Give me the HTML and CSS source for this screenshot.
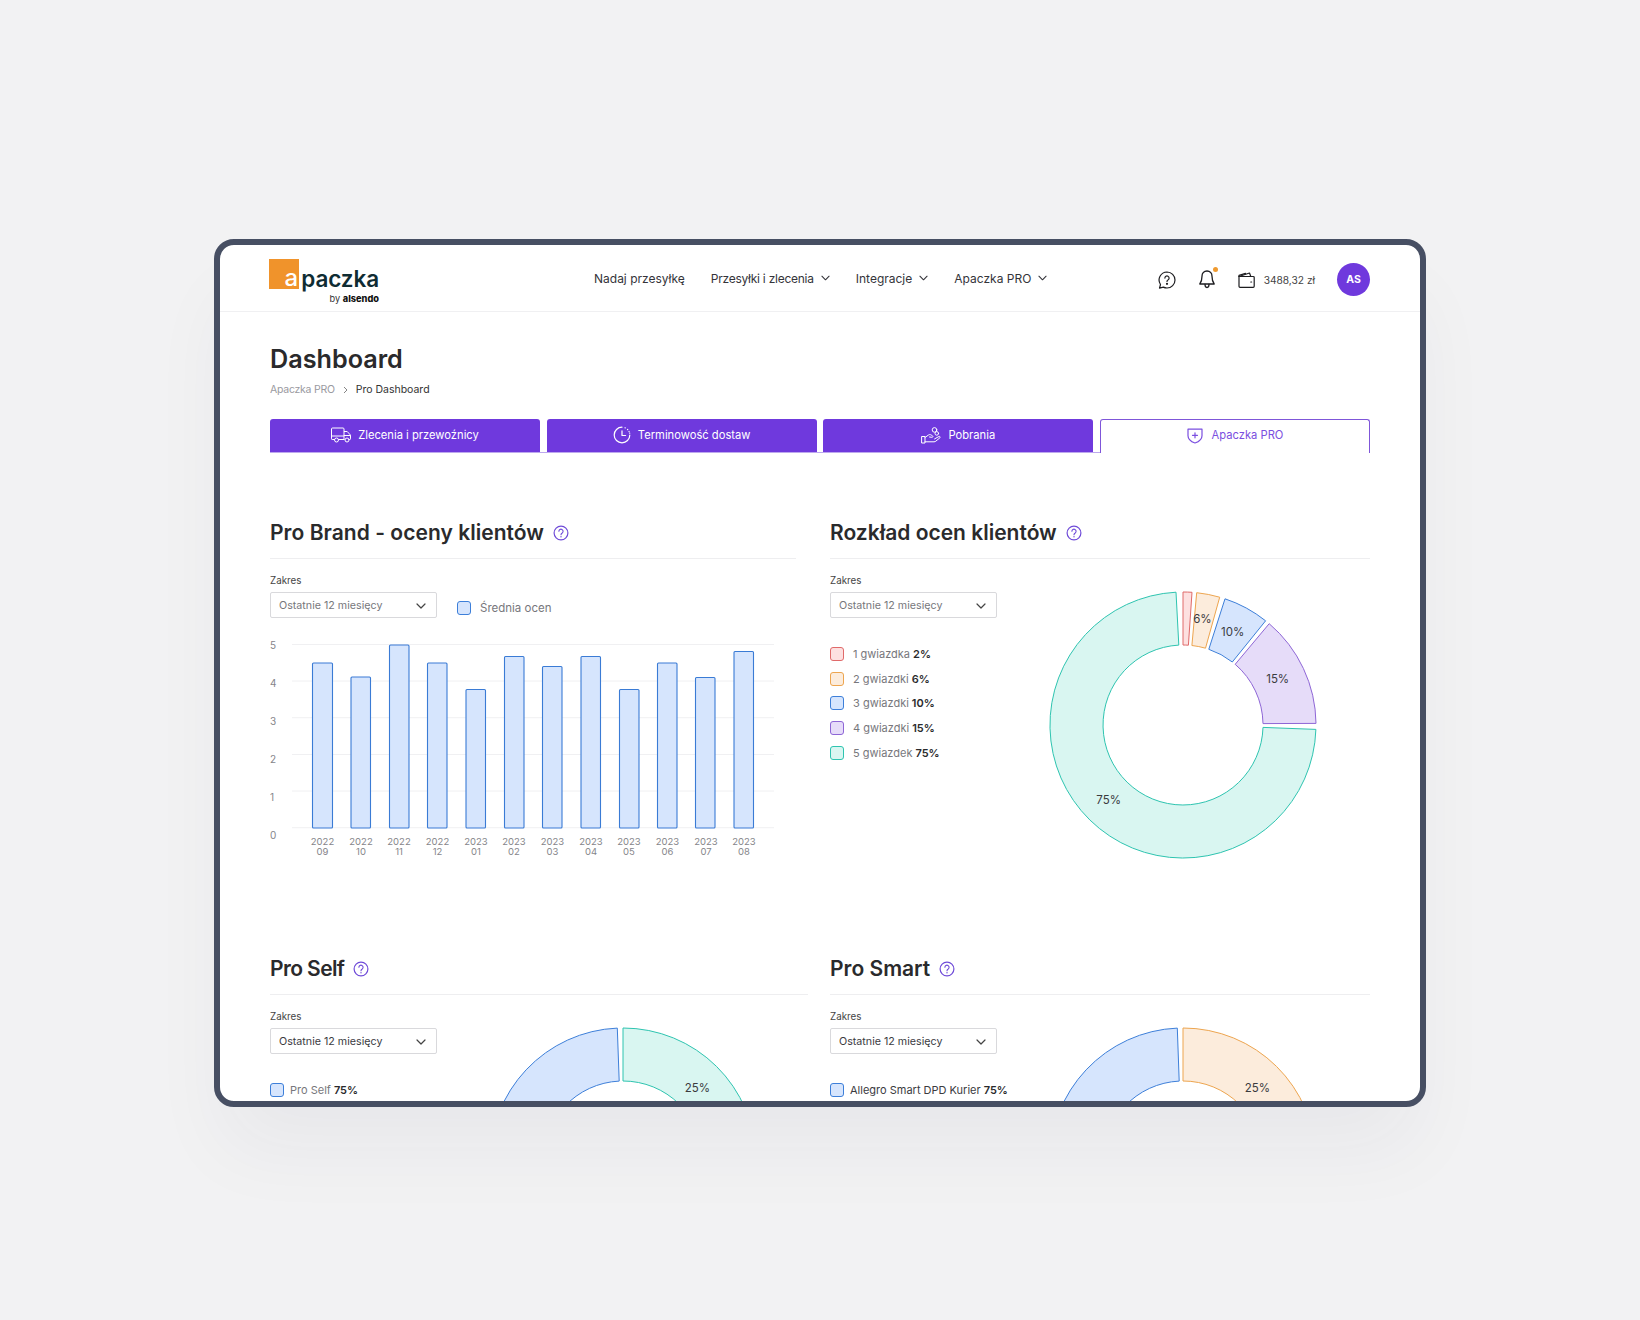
FILE: index.html
```html
<!DOCTYPE html>
<html lang="pl">
<head>
  <meta charset="UTF-8" />
  <meta name="viewport" content="width=device-width, initial-scale=1" />
  <title>Apaczka PRO - Dashboard</title>
  <link rel="stylesheet" href="styles.css">
</head>
<body>
  <svg class="sprite" aria-hidden="true">
    <symbol id="help" viewBox="0 0 16 16">
      <circle cx="8" cy="8" r="6.9" fill="none" stroke="currentColor" stroke-width="1.2"/>
      <path d="M5.9 6.3a2.1 2.1 0 1 1 3.3 1.7c-.8.5-1.2.9-1.2 1.8" fill="none" stroke="currentColor" stroke-width="1.1" stroke-linecap="round"/>
      <circle cx="8" cy="11.7" r=".7" fill="currentColor"/>
    </symbol>
    <symbol id="chev" viewBox="0 0 10 6">
      <path d="M1 1l4 4 4-4" fill="none" stroke="currentColor" stroke-width="1.2" stroke-linecap="round" stroke-linejoin="round"/>
    </symbol>
  </svg>

  <div class="frame">
    <header class="topbar">
      <a class="logo">
        <span class="logo-main"><span class="logo-box">a</span><span class="logo-name">paczka</span></span>
        <span class="logo-by">by <b>alsendo</b></span>
      </a>
      <nav class="nav">
        <a>Nadaj przesyłkę</a>
        <a class="nav-tight">Przesyłki i zlecenia <svg class="chev"><use href="#chev"/></svg></a>
        <a>Integracje <svg class="chev"><use href="#chev"/></svg></a>
        <a>Apaczka PRO <svg class="chev"><use href="#chev"/></svg></a>
      </nav>
      <div class="actions">
        <svg class="act-icon" viewBox="0 0 18 18" fill="none" stroke="currentColor" stroke-width="1.2" stroke-linecap="round" stroke-linejoin="round">
          <path d="M9 1a8 8 0 0 1 0 16c-1.3 0-2.6-.3-3.7-.9l-3.800 1 1-3.600A8 8 0 0 1 9 1z"/>
          <path d="M6.900 7.100a2.100 2.100 0 1 1 3.300 1.700c-.8.5-1.200.9-1.200 1.700"/>
          <circle cx="9" cy="12.800" r=".5" fill="currentColor"/>
        </svg>
        <span class="bell">
          <svg class="act-icon act-bell" viewBox="0 0 16 19" fill="none" stroke="currentColor" stroke-width="1.3" stroke-linecap="round" stroke-linejoin="round">
            <path d="M8 1c-3 0-5 2.300-5 5.200 0 4.300-.9 6.100-2.200 7.800h14.400c-1.300-1.700-2.200-3.500-2.200-7.800C13 3.300 11 1 8 1z"/>
            <path d="M6 14.300c0 1.800.8 3.200 2 3.200s2-1.400 2-3.200"/>
          </svg>
          <i class="bell-dot"></i>
        </span>
        <span class="wallet">
          <svg class="act-icon act-wallet" viewBox="0 0 17 16" fill="none" stroke="currentColor" stroke-width="1.2" stroke-linecap="round" stroke-linejoin="round">
            <path d="M1 4.500h14.200a1 1 0 0 1 1 1v8.800a1 1 0 0 1-1 1H2a1 1 0 0 1-1-1z"/>
            <path d="M1 4.500 11.500 1l1.300 3.500"/>
            <path d="M1 4.500V3.300l6.500-1.900"/>
            <path d="M12.800 10h.8"/>
          </svg>
          <span>3488,32 zł</span>
        </span>
        <span class="avatar">AS</span>
      </div>
    </header>

    <main class="content">
      <h1 class="page-title">Dashboard</h1>
      <div class="crumbs">
        <span>Apaczka PRO</span>
        <svg width="5" height="8" viewBox="0 0 5 8"><path d="M1 1l3 3-3 3" fill="none" stroke="#777" stroke-width=".9"/></svg>
        <b>Pro Dashboard</b>
      </div>

      <div class="tabs">
        <a class="tab">
          <svg width="20" height="16" viewBox="0 0 20 16" fill="none" stroke="currentColor" stroke-width="1" stroke-linejoin="round">
            <path d="M3.500 12.500H1.200a.7.7 0 0 1-.7-.7V2a1 1 0 0 1 1-1h10.500a1 1 0 0 1 1 1v10.500H7.500"/>
            <path d="M13 4.500h3.200l3.300 3.600v3.700a.7.7 0 0 1-.7.7h-1.300M13.500 12.500h.5"/>
            <path d="M.5 9h12.500M13 8.500h6"/>
            <circle cx="5.500" cy="13" r="2"/><circle cx="16" cy="13" r="2"/>
          </svg>
          Zlecenia i przewoźnicy
        </a>
        <a class="tab">
          <svg width="18" height="18" viewBox="0 0 18 18" fill="none" stroke="currentColor" stroke-width="1.2" stroke-linecap="round" stroke-linejoin="round">
            <path d="M9 1.200A7.800 7.800 0 1 0 16.800 9"/>
            <path d="M9 4.800V9.500h3.600"/>
            <path d="M12 1.800l.2.1M14.500 3.300l.2.2M16 5.500l.1.2M16.700 7.100v.1"/>
          </svg>
          Terminowość dostaw
        </a>
        <a class="tab">
          <svg width="20" height="17" viewBox="0 0 20 17" fill="none" stroke="currentColor" stroke-width="1" stroke-linecap="round" stroke-linejoin="round">
            <path d="M1 9.500h3v6.500H1z"/>
            <path d="M4 10.500l3.500-2.500c1-.6 1.800-.5 2.700 0l1.300.8c.8.500.4 1.700-.6 1.500l-2.400-.3"/>
            <path d="M4 14.800h9c.8 0 1.300-.2 1.900-.7l4-3.300c.7-.7-.1-1.800-1-1.300l-4.300 2.400"/>
            <circle cx="13.500" cy="2.900" r="2.300"/><circle cx="15.800" cy="6.400" r="1.800"/>
          </svg>
          Pobrania
        </a>
        <a class="tab tab-active">
          <svg width="16" height="17" viewBox="0 0 16 17" fill="none" stroke="currentColor" stroke-width="1.2" stroke-linecap="round" stroke-linejoin="round">
            <path d="M1 2.200h14v6.500c0 3.300-2.800 5.800-7 7.300-4.200-1.500-7-4-7-7.300z"/>
            <path d="M8 5.800v5M5.500 8.300h5"/>
          </svg>
          Apaczka PRO
        </a>
      </div>

      <div class="panels">
        <section class="panel">
          <div class="panel-head">
            <h2 class="title-wide">Pro Brand - oceny klientów</h2>
            <svg class="help"><use href="#help"/></svg>
          </div>
          <div class="bar-controls">
            <div class="field">
              <label>Zakres</label>
              <div class="select select-muted">Ostatnie 12 miesięcy <svg class="select-chev"><use href="#chev"/></svg></div>
            </div>
            <div class="bar-legend"><i class="swatch swatch-blue"></i>Średnia ocen</div>
          </div>
          <svg class="bar-chart" width="526" height="230" viewBox="270 630 526 230">
            <g class="grid">
              <path d="M292 644.500H774M292 681H774M292 717.700H774M292 754.500H774M292 791H774M292 827.700H774"/>
            </g>
            <g class="y-labels">
              <text x="270" y="649">5</text><text x="270" y="687">4</text><text x="270" y="725">3</text>
              <text x="270" y="763">2</text><text x="270" y="801">1</text><text x="270" y="839">0</text>
            </g>
            <g class="bars">
              <rect x="312.500" y="663" width="20" height="165" rx="1"/>
              <rect x="351" y="677" width="19.500" height="151" rx="1"/>
              <rect x="389.500" y="645" width="19.500" height="183" rx="1"/>
              <rect x="427.500" y="663" width="19.500" height="165" rx="1"/>
              <rect x="466" y="689.500" width="19.500" height="138.500" rx="1"/>
              <rect x="504.500" y="656.500" width="19.500" height="171.500" rx="1"/>
              <rect x="542.500" y="666.500" width="19.500" height="161.500" rx="1"/>
              <rect x="581" y="656.500" width="19.500" height="171.500" rx="1"/>
              <rect x="619.500" y="689.500" width="19.500" height="138.500" rx="1"/>
              <rect x="657.500" y="663" width="19.500" height="165" rx="1"/>
              <rect x="695.500" y="677.500" width="19.500" height="150.500" rx="1"/>
              <rect x="734" y="651.500" width="19.500" height="176.500" rx="1"/>
            </g>
            <g class="x-labels">
              <text x="322.500" y="845">2022</text><text x="322.500" y="855">09</text>
              <text x="361" y="845">2022</text><text x="361" y="855">10</text>
              <text x="399" y="845">2022</text><text x="399" y="855">11</text>
              <text x="437.500" y="845">2022</text><text x="437.500" y="855">12</text>
              <text x="476" y="845">2023</text><text x="476" y="855">01</text>
              <text x="514" y="845">2023</text><text x="514" y="855">02</text>
              <text x="552.500" y="845">2023</text><text x="552.500" y="855">03</text>
              <text x="591" y="845">2023</text><text x="591" y="855">04</text>
              <text x="629" y="845">2023</text><text x="629" y="855">05</text>
              <text x="667.500" y="845">2023</text><text x="667.500" y="855">06</text>
              <text x="706" y="845">2023</text><text x="706" y="855">07</text>
              <text x="744" y="845">2023</text><text x="744" y="855">08</text>
            </g>
          </svg>
        </section>

        <section class="panel">
          <div class="panel-head">
            <h2>Rozkład ocen klientów</h2>
            <svg class="help"><use href="#help"/></svg>
          </div>
          <div class="panel-body">
            <div class="side">
              <div class="field">
                <label>Zakres</label>
                <div class="select select-muted">Ostatnie 12 miesięcy <svg class="select-chev"><use href="#chev"/></svg></div>
              </div>
              <ul class="legend">
                <li><i class="swatch swatch-red"></i>1 gwiazdka <b>2%</b></li>
                <li><i class="swatch swatch-orange"></i>2 gwiazdki <b>6%</b></li>
                <li><i class="swatch swatch-blue"></i>3 gwiazdki <b>10%</b></li>
                <li><i class="swatch swatch-purple"></i>4 gwiazdki <b>15%</b></li>
                <li><i class="swatch swatch-teal"></i>5 gwiazdek <b>75%</b></li>
              </ul>
            </div>
            <svg class="donut" width="270" height="270" viewBox="-135 -135 270 270">
              <path class="seg-red" d="M0 -133A133 133 0 0 1 9 -132.700L5.400 -79.800A80 80 0 0 0 0 -80Z"/>
              <path class="seg-orange" d="M13.700 -132.300A133 133 0 0 1 36.700 -127.800L22.500 -76.800A80 80 0 0 0 8.900 -79.500Z"/>
              <path class="seg-blue" d="M42 -126.200A133 133 0 0 1 82.600 -104.200L49.300 -63A80 80 0 0 0 25.800 -75.700Z"/>
              <path class="seg-purple" d="M86.200 -101.300A133 133 0 0 1 133 -1.600L80 -1.400A80 80 0 0 0 52.200 -60.700Z"/>
              <path class="seg-teal" d="M132.900 4.400A133 133 0 1 1 -7 -132.800L-4.200 -79.900A80 80 0 1 0 80 2.400Z"/>
              <text x="19.400" y="-102">6%</text>
              <text x="49.700" y="-89">10%</text>
              <text x="94.700" y="-42">15%</text>
              <text x="-74.300" y="79">75%</text>
            </svg>
          </div>
        </section>

        <section class="panel">
          <div class="panel-head panel-head-long">
            <h2 class="title-short">Pro Self</h2>
            <svg class="help"><use href="#help"/></svg>
          </div>
          <div class="panel-body">
            <div class="side">
              <div class="field">
                <label>Zakres</label>
                <div class="select">Ostatnie 12 miesięcy <svg class="select-chev"><use href="#chev"/></svg></div>
              </div>
              <ul class="legend legend-tight">
                <li><i class="swatch swatch-blue"></i>Pro Self <b>75%</b></li>
              </ul>
            </div>
            <svg class="donut" width="270" height="270" viewBox="-135 -135 270 270">
              <path class="seg-blue" d="M132.900 4.400A133 133 0 1 1 -5.700 -132.900L-3.800 -79.900A80 80 0 1 0 80 2.400Z"/>
              <path class="seg-teal" d="M0 -133A133 133 0 0 1 133 -1.500L80 -1.400A80 80 0 0 0 0 -80Z"/>
              <text x="74.500" y="-69">25%</text>
            </svg>
          </div>
        </section>

        <section class="panel">
          <div class="panel-head">
            <h2>Pro Smart</h2>
            <svg class="help"><use href="#help"/></svg>
          </div>
          <div class="panel-body">
            <div class="side">
              <div class="field">
                <label>Zakres</label>
                <div class="select">Ostatnie 12 miesięcy <svg class="select-chev"><use href="#chev"/></svg></div>
              </div>
              <ul class="legend legend-tight legend-dark">
                <li><i class="swatch swatch-blue"></i>Allegro Smart DPD Kurier <b>75%</b></li>
              </ul>
            </div>
            <svg class="donut" width="270" height="270" viewBox="-135 -135 270 270">
              <path class="seg-blue" d="M132.900 4.400A133 133 0 1 1 -5.700 -132.900L-3.800 -79.900A80 80 0 1 0 80 2.400Z"/>
              <path class="seg-orange" d="M0 -133A133 133 0 0 1 133 -1.500L80 -1.400A80 80 0 0 0 0 -80Z"/>
              <text x="74.500" y="-69">25%</text>
            </svg>
          </div>
        </section>
      </div>
    </main>
  </div>
</body>
</html>
```

FILE: styles.css
```css
/* Reset & base */
* {
  box-sizing: border-box;
}
body {
  margin: 0;
  min-height: 1320px;
  padding: 239px 0 0 214px;
  background: #f2f2f3;
  color: #2a2a2c;
  font-family: Inter, "Open Sans", sans-serif;
  font-size: 12px;
}
.sprite {
  display: none;
}
ul {
  margin: 0;
  padding: 0;
  list-style: none;
}

/* Device frame */
.frame {
  width: 1212px;
  height: 868px;
  overflow: hidden;
  background: #fff;
  border: 6px solid #474f63;
  border-radius: 20px;
  box-shadow: 0 50px 80px -10px rgba(40, 44, 70, 0.05);
}

/* Top bar */
.topbar {
  display: flex;
  align-items: center;
  height: 67px;
  padding: 0 50px;
  border-bottom: 1px solid #f0f0f2;
}
.logo {
  display: flex;
  flex-direction: column;
  align-items: flex-end;
  width: 109px;
  margin-top: 8px;
}
.logo-main {
  display: flex;
  align-items: flex-start;
}
.logo-box {
  width: 30px;
  height: 30px;
  padding: 4px 1px 0 0;
  background: #f0932b;
  color: #fff;
  font-size: 24px;
  line-height: 29px;
  font-weight: 500;
  text-align: right;
}
.logo-name {
  margin: 5px 0 0 2px;
  color: #0f2c33;
  font-size: 22.5px;
  line-height: 29px;
  font-weight: 600;
  letter-spacing: -0.1px;
}
.logo-by {
  color: #333;
  font-size: 9.2px;
  line-height: 12px;
}
.logo-by b {
  color: #111;
  font-weight: 800;
}
.nav {
  display: flex;
  align-items: center;
  gap: 26px;
  margin-left: 215px;
  color: #34343a;
  font-size: 12px;
}
.nav a {
  display: flex;
  align-items: center;
  gap: 7px;
}
.nav .nav-tight {
  letter-spacing: -0.25px;
}
.chev {
  width: 9px;
  height: 6px;
}
.actions {
  display: flex;
  align-items: center;
  margin: 3px 0 0 auto;
}
.act-icon {
  display: block;
  width: 18px;
  height: 18px;
  color: #1d1d20;
}
.act-bell {
  width: 16px;
  height: 19px;
}
.act-wallet {
  width: 17px;
  height: 16px;
}
.bell {
  position: relative;
  margin-left: 23px;
}
.bell-dot {
  position: absolute;
  top: -3px;
  right: -3px;
  width: 5px;
  height: 5px;
  border-radius: 50%;
  background: #ef9a30;
}
.wallet {
  display: flex;
  align-items: center;
  gap: 9px;
  margin-left: 23px;
  color: #444;
  font-size: 10.2px;
}
.avatar {
  display: flex;
  align-items: center;
  justify-content: center;
  width: 33px;
  height: 33px;
  margin-left: 22px;
  border-radius: 50%;
  background: #6f39dd;
  color: #fff;
  font-size: 10.5px;
  font-weight: 700;
}

/* Page head */
.content {
  padding: 0 50px;
}
.page-title {
  margin: 30px 0 0;
  font-size: 25.2px;
  line-height: 34px;
  font-weight: 600;
}
.crumbs {
  display: flex;
  align-items: center;
  gap: 8px;
  margin-top: 7px;
  color: #9a9a9f;
  font-size: 10.5px;
  line-height: 14px;
}
.crumbs span {
  letter-spacing: -0.25px;
}
.crumbs b {
  color: #333;
  font-weight: 400;
}

/* Tabs */
.tabs {
  display: grid;
  grid-template-columns: repeat(4, 270px);
  column-gap: 6.67px;
  margin-top: 22px;
  border-bottom: 1px solid #bda8ee;
}
.tab {
  display: flex;
  align-items: center;
  justify-content: center;
  gap: 7px;
  height: 33px;
  padding-bottom: 1px;
  border-radius: 3px 3px 0 0;
  background: #6f39dd;
  color: #fff;
  font-size: 11.2px;
}
.tab-active {
  gap: 9px;
  height: 34px;
  margin-bottom: -1px;
  padding-bottom: 3px;
  border: 1px solid #7f56d9;
  border-bottom: 0;
  background: #fff;
  color: #7b4fe0;
}

/* Panels */
.panels {
  display: grid;
  grid-template-columns: 526px 540px;
  grid-template-rows: 436px 436px;
  column-gap: 34px;
  margin-top: 64px;
}
.panel-head {
  display: flex;
  align-items: center;
  gap: 9px;
  height: 42px;
  padding-bottom: 9px;
  border-bottom: 1px solid #eeeef0;
}
.panel-head-long {
  margin-right: -12px;
}
.panel-head h2 {
  margin: 0;
  font-size: 21px;
  line-height: 30px;
  font-weight: 600;
}
.panel-head .title-wide {
  letter-spacing: 0.04px;
}
.panel-head .title-short {
  letter-spacing: -0.6px;
}
.help {
  width: 16px;
  height: 16px;
  color: #6f4bd8;
}
.field label {
  display: block;
  margin-bottom: 4px;
  color: #444;
  font-size: 9.8px;
  line-height: 14px;
}
.select {
  display: flex;
  align-items: center;
  justify-content: space-between;
  width: 167px;
  height: 26px;
  padding: 1px 10px 0 8px;
  border: 1px solid #d9d9dc;
  border-radius: 2px;
  color: #3b3b3f;
  font-size: 10.7px;
}
.select-muted {
  color: #77777c;
}
.select-chev {
  width: 10px;
  height: 6px;
  color: #444;
}
.swatch {
  flex: none;
  width: 14px;
  height: 14px;
  border: 1.2px solid;
  border-radius: 3px;
}
.swatch-red { background: #fde0e0; border-color: #e06a6a; }
.swatch-orange { background: #fcecdc; border-color: #eda54f; }
.swatch-blue { background: #d6e5fd; border-color: #3d7fd9; }
.swatch-purple { background: #e6dcf9; border-color: #8e66d6; }
.swatch-teal { background: #d9f6f1; border-color: #2ec4b0; }

/* Bar chart */
.bar-controls {
  display: flex;
  align-items: flex-end;
  margin-top: 15px;
}
.bar-legend {
  display: flex;
  align-items: center;
  gap: 9px;
  margin: 0 0 3px 20px;
  color: #77777c;
  font-size: 11.5px;
}
.bar-chart {
  display: block;
  margin-top: 12px;
}
.bar-chart text {
  font-family: Inter, sans-serif;
  fill: #85858a;
}
.grid path {
  fill: none;
  stroke: #f0f0f2;
}
.y-labels text {
  font-size: 10px;
}
.x-labels text {
  font-size: 9.5px;
  text-anchor: middle;
}
.bars rect {
  fill: #d6e5fd;
  stroke: #3a7bd5;
  stroke-width: 1.1;
}

/* Donuts */
.panel-body {
  display: flex;
  align-items: flex-start;
  margin-top: 15px;
}
.side {
  flex: none;
  width: 167px;
}
.legend {
  margin-top: 24px;
  color: #77777c;
  font-size: 11px;
}
.legend-tight {
  white-space: nowrap;
}
.legend-dark {
  color: #3b3b3f;
}
.legend li {
  display: flex;
  align-items: center;
  gap: 9px;
  height: 24.6px;
}
.legend-tight li {
  gap: 6px;
}
.legend b {
  margin-left: -6px;
  color: #2a2a2c;
  font-weight: 600;
}
.legend-tight b {
  margin-left: -3px;
}
.donut {
  flex: none;
  margin: 16px 0 0 51px;
}
.donut path {
  stroke-width: 1;
  stroke-linejoin: round;
}
.donut text {
  font-family: Inter, sans-serif;
  font-size: 11.5px;
  fill: #3b3b3f;
  text-anchor: middle;
}
.seg-red { fill: #fde0e0; stroke: #e06a6a; }
.seg-orange { fill: #fcecdc; stroke: #eda54f; }
.seg-blue { fill: #d6e5fd; stroke: #3d7fd9; }
.seg-purple { fill: #e6dcf9; stroke: #8e66d6; }
.seg-teal { fill: #d9f6f1; stroke: #2ec4b0; }
```
